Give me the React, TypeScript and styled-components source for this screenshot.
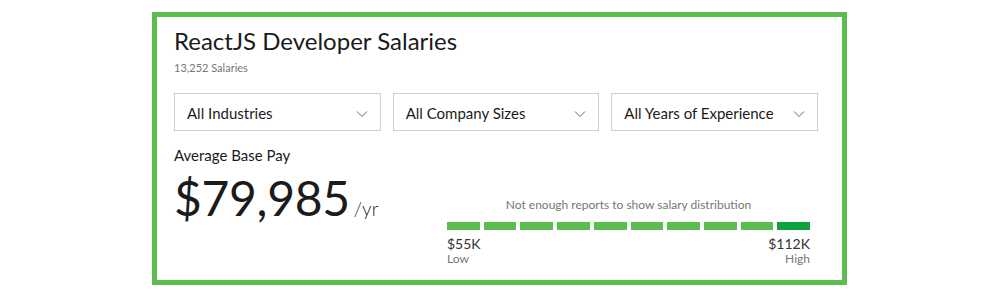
import styled, { createGlobalStyle } from "styled-components";

const GlobalStyle = createGlobalStyle`
 body {
  margin: 0;
  background: #ffffff;
  font-family: "Lato", "Liberation Sans", sans-serif;
 }
`;

const filters = ["All Industries", "All Company Sizes", "All Years of Experience"];
const bars = Array.from({ length: 10 }, (_, i) => i === 9);

export default function App() {
 return (
  <>
   <GlobalStyle />
   <Page>
    <Card>
     <Title>ReactJS Developer Salaries</Title>
     <Count>13,252 Salaries</Count>
     <Filters>
      {filters.map((f) => (
       <Select key={f}>
        <span>{f}</span>
        <svg width="12" height="8" viewBox="0 0 12 8">
         <path d="M1 1.5 L6 6.5 L11 1.5" fill="none" stroke="#666" strokeWidth="1" />
        </svg>
       </Select>
      ))}
     </Filters>
     <Bottom>
      <PayBlock>
       <PayLabel>Average Base Pay</PayLabel>
       <Pay>
        $79,985<Per>/yr</Per>
       </Pay>
      </PayBlock>
      <Distribution>
       <Note>Not enough reports to show salary distribution</Note>
       <Bars>
        {bars.map((high, i) => (
         <Bar key={i} $high={high} />
        ))}
       </Bars>
       <Range>
        <RangeEnd>
         <Amount>$55K</Amount>
         <Caption>Low</Caption>
        </RangeEnd>
        <RangeEnd $right>
         <Amount>$112K</Amount>
         <Caption>High</Caption>
        </RangeEnd>
       </Range>
      </Distribution>
     </Bottom>
    </Card>
   </Page>
  </>
 );
}

const Page = styled.div`
 padding: 12px 0 0 152px;
`;

const Card = styled.section`
 box-sizing: border-box;
 width: 695px;
 height: 273px;
 border: 5px solid #5cbd4f;
 padding: 7px 24px 0 17px;
 color: #1b1b1b;
`;

const Title = styled.h1`
 margin: 0;
 font-size: 24px;
 font-weight: 400;
 line-height: 34px;
`;

const Count = styled.div`
 font-size: 11px;
 color: #767676;
 line-height: 16px;
 margin-top: 2px;
`;

const Filters = styled.div`
 display: grid;
 grid-template-columns: repeat(3, 1fr);
 gap: 12px;
 margin-top: 17px;
`;

const Select = styled.div`
 box-sizing: border-box;
 height: 38px;
 border: 1px solid #cfcfcf;
 display: flex;
 align-items: center;
 justify-content: space-between;
 padding: 1px 12px 0 12px;
 font-size: 15px;
 color: #1b1b1b;
 svg {
  margin-top: 2px;
 }
`;

const Bottom = styled.div`
 display: flex;
 justify-content: space-between;
 padding-right: 8px;
 margin-top: 14px;
`;

const PayBlock = styled.div`
 display: flex;
 flex-direction: column;
`;

const PayLabel = styled.div`
 font-size: 15px;
 line-height: 20px;
`;

const Pay = styled.div`
 font-size: 48px;
 line-height: 60px;
 margin-top: 3px;
 letter-spacing: -0.3px;
`;

const Per = styled.span`
 font-size: 19px;
 font-weight: 300;
 margin-left: 4px;
 letter-spacing: 0;
`;

const Distribution = styled.div`
 width: 363px;
 margin-top: 52px;
`;

const Note = styled.div`
 font-size: 12px;
 color: #767676;
 text-align: center;
 line-height: 16px;
`;

const Bars = styled.div`
 display: grid;
 grid-template-columns: repeat(10, 1fr);
 gap: 4px;
 margin-top: 9px;
`;

const Bar = styled.div<{ $high: boolean }>`
 height: 8px;
 background: ${(p) => (p.$high ? "#0fa340" : "#5cbd4f")};
`;

const Range = styled.div`
 display: flex;
 justify-content: space-between;
 margin-top: 6px;
`;

const RangeEnd = styled.div<{ $right?: boolean }>`
 display: flex;
 flex-direction: column;
 align-items: ${(p) => (p.$right ? "flex-end" : "flex-start")};
`;

const Amount = styled.div`
 font-size: 14px;
 line-height: 16px;
 color: #333;
`;

const Caption = styled.div`
 font-size: 12px;
 line-height: 14px;
 color: #767676;
`;
